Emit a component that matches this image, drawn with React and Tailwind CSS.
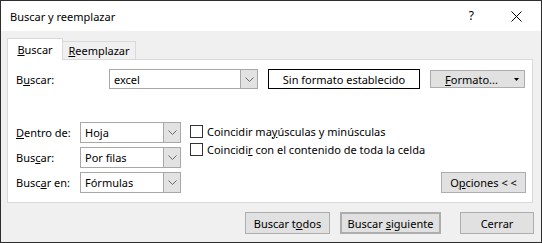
import React from 'react'

const font = { fontFamily: '"Noto Sans", "Open Sans", sans-serif' }

function Chevron() {
  return (
    <svg width="9" height="5" viewBox="0 0 9 5" className="block">
      <path d="M0.5 0.5 L4.5 4.5 L8.5 0.5" fill="none" stroke="#6a6a6a" strokeWidth="1" />
    </svg>
  )
}

function Combo({ value, width, height = 21 }) {
  return (
    <div className="flex bg-white border border-[#a8a8a8] box-border" style={{ width, height }}>
      <div className="flex-1 flex items-center pl-[4px] text-[11px] text-black leading-none">{value}</div>
      <div className="w-[17px] flex items-center justify-center bg-[#e2e2e2] border-l border-[#a8a8a8]">
        <Chevron />
      </div>
    </div>
  )
}

function Btn({ children, className = '' }) {
  return (
    <div className={`flex items-center justify-center bg-[#e1e1e1] border border-[#adadad] text-[11px] text-black leading-none box-border ${className}`}>
      {children}
    </div>
  )
}

function Check({ children }) {
  return (
    <div className="flex items-center h-[18px]">
      <div className="w-[13px] h-[13px] border border-[#333] bg-white box-border" />
      <span className="ml-[4px] text-[11px] text-black leading-none">{children}</span>
    </div>
  )
}

export default function App() {
  return (
    <div style={font} className="w-[542px] h-[243px] border border-[#2d2d2d] bg-[#f0f0f0] flex flex-col box-border text-black">
      {/* title bar */}
      <div className="h-[30px] bg-white flex items-center pl-[9px] shrink-0">
        <span className="text-[11px] leading-none">Buscar y reemplazar</span>
        <span className="ml-auto text-[12px] leading-none">?</span>
        <div className="w-[46px] flex justify-center ml-[19px] mr-[2px]">
          <svg width="11" height="11" viewBox="0 0 11 11">
            <path d="M0.5 0.5 L10.5 10.5 M10.5 0.5 L0.5 10.5" stroke="#000" strokeWidth="1" />
          </svg>
        </div>
      </div>

      <div className="px-[6px] pt-[7px] flex flex-col">
        {/* tabs */}
        <div className="flex items-end h-[21px]">
          <div className="relative z-10 w-[56px] h-[22px] bg-white border border-b-0 border-[#d9d9d9] flex items-center justify-center text-[11px] leading-none box-border -mb-[1px]">
            <span><span className="underline">B</span>uscar</span>
          </div>
          <div className="w-[73px] h-[18px] bg-[#f0f0f0] border border-l-0 border-b-0 border-[#d9d9d9] flex items-center justify-center text-[11px] leading-none box-border">
            <span><span className="underline">R</span>eemplazar</span>
          </div>
        </div>

        {/* panel */}
        <div className="w-[526px] h-[144px] bg-white border border-[#d9d9d9] box-border pl-[8px] pt-[9px] flex flex-col">
          <div className="flex items-center h-[20px]">
            <div className="w-[93px] text-[11px] leading-none">B<span className="underline">u</span>scar:</div>
            <Combo value="excel" width={149} height={20} />
            <div className="ml-[10px] w-[152px] h-[20px] border border-black box-border flex items-center justify-center text-[11px] leading-none">
              Sin formato establecido
            </div>
            <Btn className="ml-[10px] w-[95px] h-[18px] relative">
              <span className="pr-[12px]"><span className="underline">F</span>ormato...</span>
              <svg width="5" height="3" viewBox="0 0 5 3" className="absolute right-[5px] top-[7px]">
                <path d="M0 0 L5 0 L2.5 3 Z" fill="#000" />
              </svg>
            </Btn>
          </div>

          <div className="flex mt-[33px]">
            <div className="flex flex-col gap-[4px]">
              <div className="flex items-center">
                <div className="w-[64px] text-[11px] leading-none"><span className="underline">D</span>entro de:</div>
                <Combo value="Hoja" width={101} />
              </div>
              <div className="flex items-center">
                <div className="w-[64px] text-[11px] leading-none">Bus<span className="underline">c</span>ar:</div>
                <Combo value="Por filas" width={101} />
              </div>
              <div className="flex items-center">
                <div className="w-[64px] text-[11px] leading-none">Busc<span className="underline">a</span>r en:</div>
                <Combo value="Fórmulas" width={101} />
              </div>
            </div>
            <div className="ml-[9px] flex flex-col flex-1">
              <Check>Coincidir ma<span className="underline">y</span>úsculas y minúsculas</Check>
              <Check>Coincidi<span className="underline">r</span> con el contenido de toda la celda</Check>
              <div className="flex-1" />
              <div className="flex justify-end pr-[6px]">
                <Btn className="w-[85px] h-[21px]">
                  <span>O<span className="underline">p</span>ciones &lt; &lt;</span>
                </Btn>
              </div>
            </div>
          </div>
        </div>

        {/* bottom buttons */}
        <div className="flex justify-end mt-[9px] pr-[1px]">
          <Btn className="w-[85px] h-[22px]">
            <span>Buscar t<span className="underline">o</span>dos</span>
          </Btn>
          <Btn className="ml-[10px] w-[101px] h-[22px] border-2 border-[#0078d7]">
            <span>Buscar <span className="underline">s</span>iguiente</span>
          </Btn>
          <Btn className="ml-[19px] w-[74px] h-[22px]">
            <span>Cerrar</span>
          </Btn>
        </div>
      </div>
    </div>
  )
}
